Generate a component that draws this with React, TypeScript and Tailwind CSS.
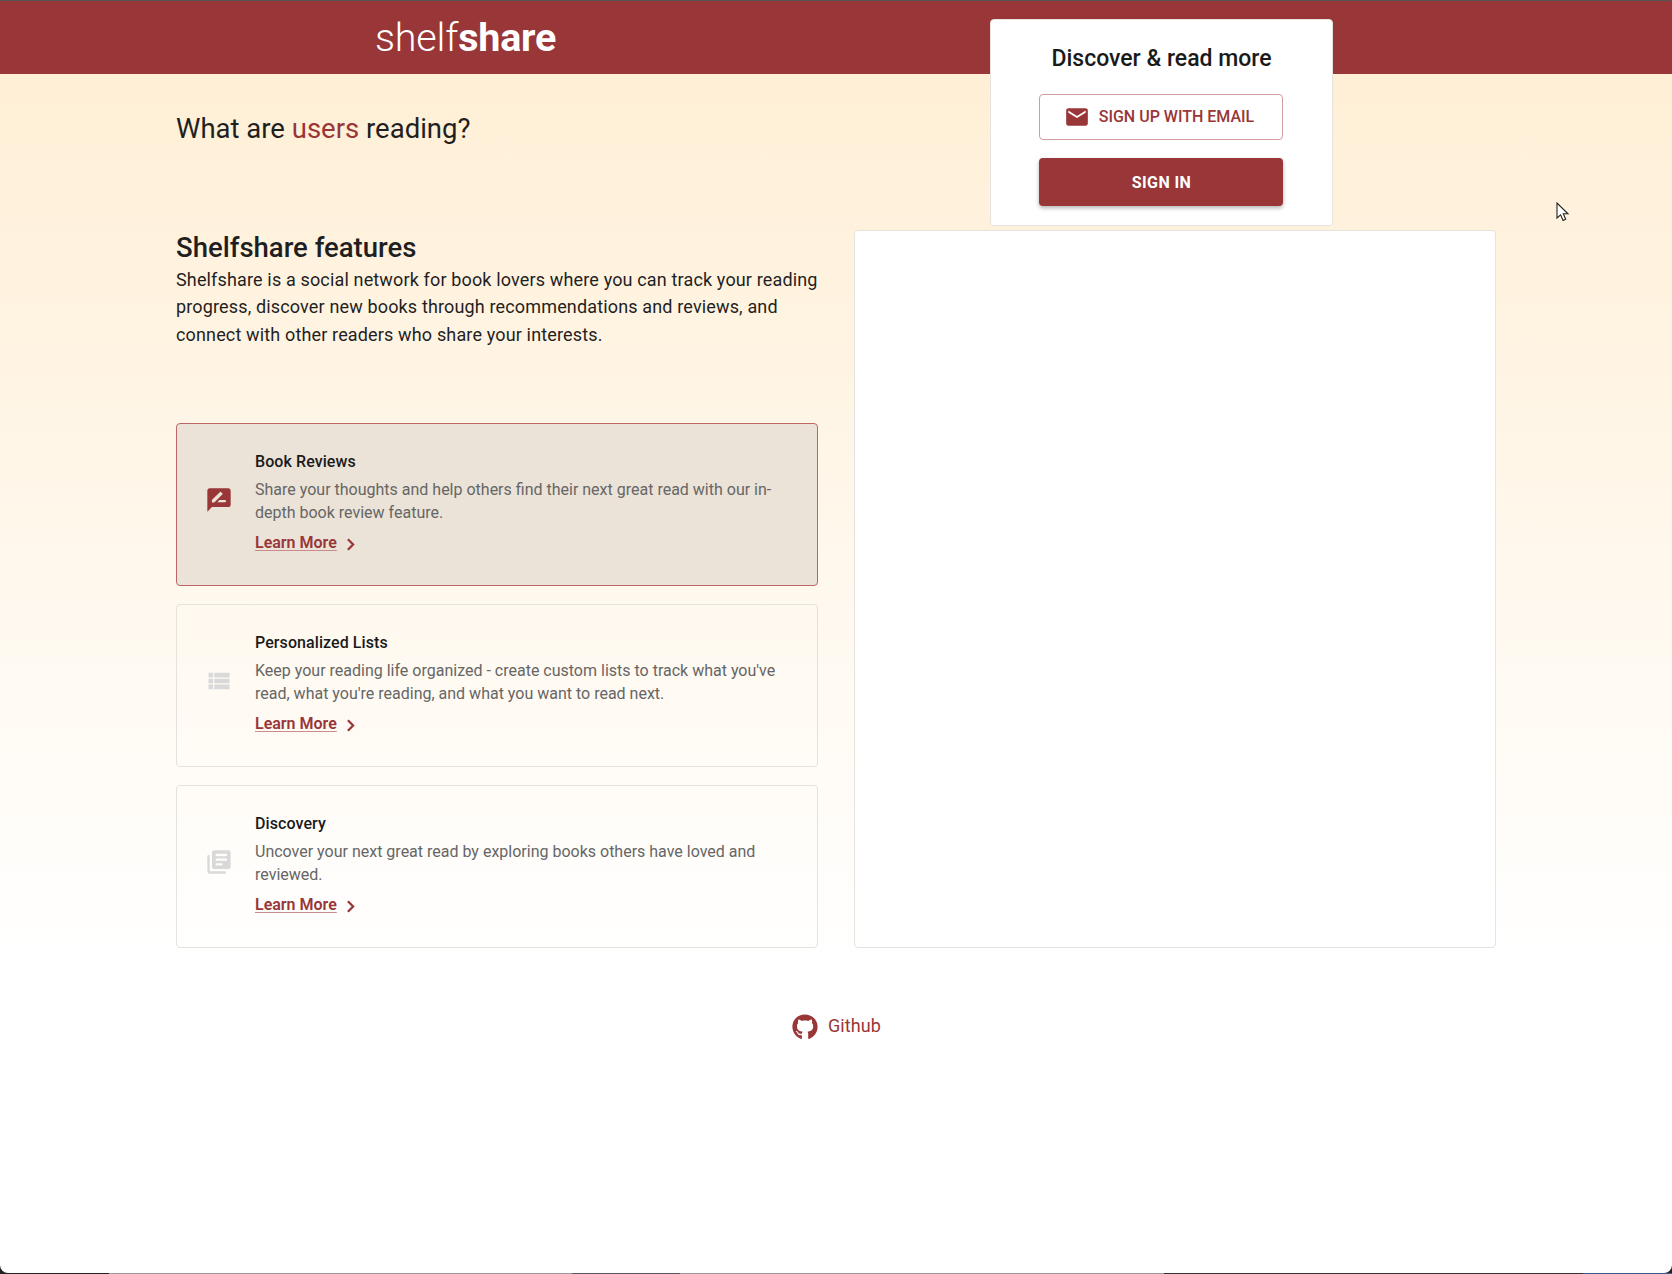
import { MdEmail } from "react-icons/md";
import { FaGithub } from "react-icons/fa";

const features = [
  {
    title: "Book Reviews",
    text: "Share your thoughts and help others find their next great read with our in-depth book review feature.",
    icon: "M20 2H4c-1.1 0-1.99.9-1.99 2L2 22l4-4h14c1.1 0 2-.9 2-2V4c0-1.1-.9-2-2-2M5.92 14v-1.76c0-.13.05-.26.15-.35l6.84-6.84c.2-.2.51-.2.71 0l1.4 1.4c.2.2.2.51 0 .71l-6.85 6.84c-.09.09-.22.15-.35.15H6.42c-.28 0-.5-.23-.5-.5M17 14h-6.5l2-2H17c.55 0 1 .45 1 1s-.45 1-1 1",
    active: true,
  },
  {
    title: "Personalized Lists",
    text: "Keep your reading life organized - create custom lists to track what you've read, what you're reading, and what you want to read next.",
    icon: "M3 14h4v-4H3zm0 5h4v-4H3zM3 9h4V5H3zm5 5h13v-4H8zm0 5h13v-4H8zM8 5v4h13V5z",
    active: false,
  },
  {
    title: "Discovery",
    text: "Uncover your next great read by exploring books others have loved and reviewed.",
    icon: "M3 6c-.55 0-1 .45-1 1v13c0 1.1.9 2 2 2h13c.55 0 1-.45 1-1s-.45-1-1-1H5c-.55 0-1-.45-1-1V7c0-.55-.45-1-1-1m17-4H8c-1.1 0-2 .9-2 2v12c0 1.1.9 2 2 2h12c1.1 0 2-.9 2-2V4c0-1.1-.9-2-2-2m-2 9h-8c-.55 0-1-.45-1-1s.45-1 1-1h8c.55 0 1 .45 1 1s-.45 1-1 1m-4 4h-4c-.55 0-1-.45-1-1s.45-1 1-1h4c.55 0 1 .45 1 1s-.45 1-1 1m4-8h-8c-.55 0-1-.45-1-1s.45-1 1-1h8c.55 0 1 .45 1 1s-.45 1-1 1",
    active: false,
  },
];

function FeatureCard({ title, text, icon, active }: (typeof features)[number]) {
  return (
    <div className={`flex h-[163px] items-center rounded-[4px] border pl-[28px] pr-[30px] ${active ? "border-[#bd6668] bg-[#ebe3d7]" : "border-[#e6e2dd]"}`}>
      <svg viewBox="0 0 24 24" className={`mb-[8px] h-[28px] w-[28px] shrink-0 fill-current ${active ? "text-[#983638]" : "text-[#d9d9d9]"}`}>
        <path d={icon} />
      </svg>
      <div className="mb-[3px] ml-[22px] min-w-0">
        <h3 className="text-[16px] font-medium leading-[24px] tracking-[0.08px] text-[#1a1a1a]">{title}</h3>
        <p className="mt-[4px] text-[16px] leading-[23px] text-[#666]">{text}</p>
        <div className="mt-[7px] flex h-[24px] items-center">
          <a className="text-[16px] font-semibold leading-[24px] text-[#983638] underline decoration-[#c98b8c] underline-offset-2">Learn More</a>
          <svg viewBox="0 0 24 24" className="ml-[3px] mt-[3px] h-[21px] w-[21px] fill-none stroke-[#983638] stroke-[2.6]">
            <path d="M9 6l6 6-6 6" />
          </svg>
        </div>
      </div>
    </div>
  );
}

export default function App() {
  return (
    <div className="flex h-[1274px] flex-col bg-[#222] font-['Roboto',sans-serif]">
      <div className="flex min-h-0 flex-1 flex-col overflow-hidden rounded-b-[8px] bg-white">
        <header className="relative h-[74px] shrink-0 border-t border-[#555] bg-[#983638]">
          <div className="pl-[375px] pt-[12px] text-[39.5px] leading-[50px] tracking-[-0.2px] text-white">
            <span className="font-light">shelf</span>
            <span className="font-bold">share</span>
          </div>
          <div className="absolute left-[990px] top-[18px] z-10 flex h-[207px] w-[343px] flex-col items-center rounded-[4px] border border-[#e6e2dd] bg-white">
            <h2 className="mt-[22px] text-[23px] font-medium leading-[33px] text-[#1a1a1a]">Discover &amp; read more</h2>
            <button className="mr-[2px] mt-[19px] flex h-[46px] w-[244px] items-center justify-center rounded-[4px] border border-[#d19c9d] pr-[3px] text-[16px] font-medium text-[#983638]">
              <MdEmail className="mr-[9px] text-[26px]" />
              SIGN UP WITH EMAIL
            </button>
            <button className="mr-[2px] mt-[18px] h-[48px] w-[244px] rounded-[4px] bg-[#983638] pl-[2px] pt-[2px] text-[16px] font-bold tracking-[0.4px] text-white shadow-[0_2px_4px_rgba(0,0,0,0.3)]">SIGN IN</button>
          </div>
        </header>

        <main className="relative h-[888px] shrink-0 bg-gradient-to-b from-[#ffefd6] to-white">
          <div className="mx-auto w-[1320px]">
            <h1 className="pt-[35px] text-[27.5px] leading-[40px] text-[#1f1f1f]">
              What are <span className="text-[#983638]">users</span> reading?
            </h1>
            <div className="mt-[81px] grid grid-cols-2 gap-[36px]">
              <section>
                <h2 className="pt-[1px] text-[27.5px] font-medium leading-[33px] text-[#1f1f1f]">Shelfshare features</h2>
                <p className="mt-[2px] w-[648px] text-[18px] leading-[27.3px] tracking-[0.15px] text-[#1f1f1f]">
                  Shelfshare is a social network for book lovers where you can track your reading progress, discover new books through recommendations and reviews, and connect with other readers who share your interests.
                </p>
                <div className="mt-[75px] flex flex-col gap-[18px]">
                  {features.map((f) => (
                    <FeatureCard key={f.title} {...f} />
                  ))}
                </div>
              </section>
              <div className="rounded-[4px] border border-[#e6e2dd] bg-white" />
            </div>
          </div>
          <svg viewBox="0 0 14 20" className="absolute left-[1556px] top-[128px] h-[20px] w-[14px]">
            <path d="M1 1v15l3.6-3.2 2.5 5.6 2.6-1.2-2.4-5.4H12z" fill="#fff" stroke="#222" strokeWidth="1.1" />
          </svg>
        </main>

        <footer className="flex items-center justify-center gap-[10px] pl-[1px] pt-[50px] text-[18px] leading-[28px] tracking-[0.1px] text-[#983638]">
          <FaGithub className="mt-[2px] text-[26px]" />
          <span>Github</span>
        </footer>
      </div>
      <div className="flex h-px shrink-0">
        <div className="w-[109px] bg-[#222]" />
        <div className="w-[463px] bg-[#999]" />
        <div className="w-[108px] bg-[#556]" />
        <div className="w-[484px] bg-[#999]" />
        <div className="w-[419px] bg-[#333]" />
        <div className="flex-1 bg-[#3a5a8c]" />
      </div>
    </div>
  );
}
